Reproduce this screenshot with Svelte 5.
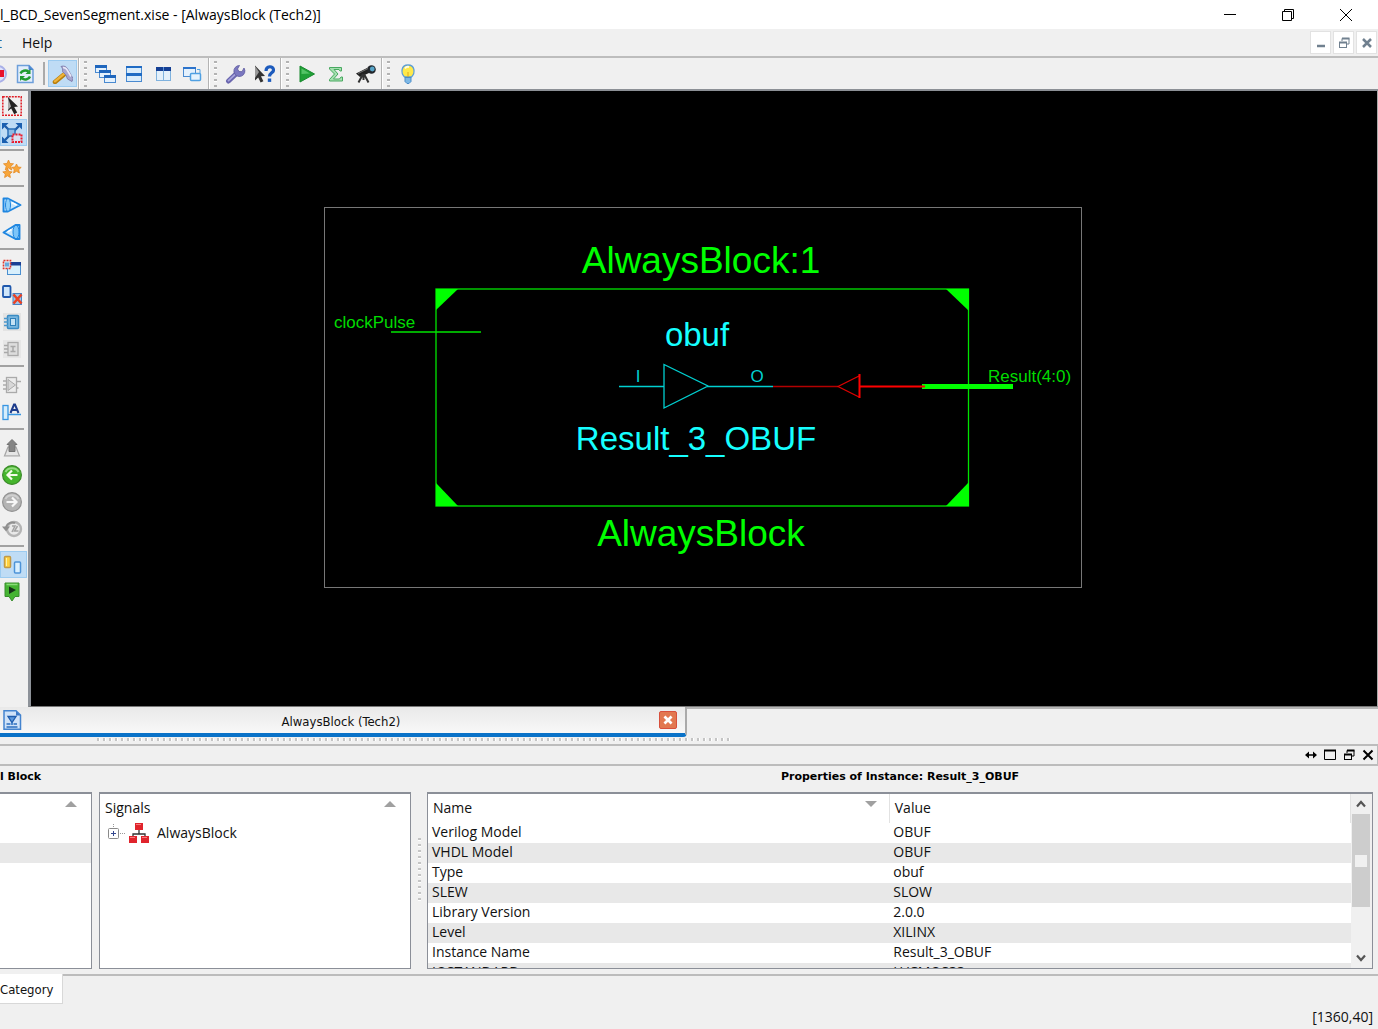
<script>
  const icons = {
    stop: '<circle cx="12" cy="10" r="8" fill="#dfe2fb" stroke="#a9b0e8" stroke-width="2"/><rect x="8" y="6" width="10" height="7" fill="#e8112d"/>',
    refresh: '<path d="M2.500 1.500h11.500l4 4v13h-15.500z" fill="#e3eefb" stroke="#6d9fda" stroke-width="1.500"/><path d="M14 1.500v4h4" fill="#4c86d2" stroke="#4c86d2"/><path d="M5.500 9.500a5 4 0 0 1 8-2" fill="none" stroke="#1e9a2f" stroke-width="2.400"/><path d="M15.500 5v5h-5z" fill="#1e9a2f"/><path d="M15 12.500a5 4 0 0 1-8 2" fill="none" stroke="#1e9a2f" stroke-width="2.400"/><path d="M5 17v-5h5z" fill="#1e9a2f"/>',
    hammer: '<path d="M3 18L12 10.500" stroke="#b97f0c" stroke-width="4.500" stroke-linecap="round"/><path d="M3 17.300L12 9.800" stroke="#eeb33a" stroke-width="2.400" stroke-linecap="round"/><path d="M9 2.500C12 1.500 14.500 2.500 16 5.500l5 9-1 3-4.500-2.500-1.500-4-3.500-3.500c.5-2 0-3.500-1.500-5z" fill="#a7a6cf" stroke="#8480ae"/><path d="M11 3.500c2.500 0 3.500 1 4.500 3l3.500 6" fill="none" stroke="#e9e9f7" stroke-width="1.600"/>',
    cascade: '<g stroke="#4a8ad0" fill="#e4f1fd"><rect x=".5" y="1.500" width="11" height="7"/><rect x="4.500" y="6.500" width="11" height="7"/><rect x="9.500" y="11.500" width="11" height="7"/></g><g fill="#1f66bd"><rect y="1" width="12" height="3"/><rect x="4" y="6" width="12" height="3"/><rect x="9" y="11" width="12" height="3"/></g>',
    tileh: '<g stroke="#4a8ad0" fill="#d9ecfb"><rect x="2.500" y="2.500" width="15" height="7"/><rect x="2.500" y="10.500" width="15" height="7"/></g><g fill="#1f6bc4"><rect x="2" y="2" width="16" height="2"/><rect x="2" y="9" width="16" height="3"/></g>',
    tilev: '<g stroke="#7fb2de" fill="#e3f0fb"><rect x="3.500" y="3.500" width="7" height="13"/><rect x="10.500" y="3.500" width="7" height="13"/></g><rect x="3" y="3" width="15" height="4" fill="#143f94"/><path d="M10.500 3v4" stroke="#5b93d6"/>',
    windows: '<rect x="1.500" y="3.500" width="12" height="9" fill="#e4f1fd" stroke="#4a8ad0"/><rect x="1" y="3" width="13" height="2" fill="#2c74cc"/><rect x="8.500" y="9.500" width="10" height="7" rx="1" fill="#e4f2fd" stroke="#4fa0e2" stroke-width="1.500"/><path d="M15 5.500h3v3.500" fill="none" stroke="#4fa0e2"/>',
    wrench: '<path d="M3.500 17L12 9" stroke="#6a66ae" stroke-width="5" stroke-linecap="round"/><path d="M3.500 16.600L12 8.600" stroke="#a7a4de" stroke-width="1.800" stroke-linecap="round"/><path d="M19 4A5.500 5.500 0 1 1 14.500 1.500L12.500 5l1.500 2.500 3 .2z" fill="#7b78c0" stroke="#5d5aa0" stroke-width=".8"/>',
    whatsthis: '<path d="M1 1.500l10 10.500-4 .2 2.400 5-2.800 1.300-2.400-5L1 16.500z" fill="#333"/><path d="M1 2l4 6-4 6z" fill="#999"/><path d="M12 7c0-5.500 7.500-5.500 7.500-1 0 3-4 2.800-4 6.500" fill="none" stroke="#1d5bbd" stroke-width="3.200"/><rect x="13.800" y="14.500" width="3.400" height="3.400" fill="#1d5bbd"/>',
    play: '<path d="M3 2l14.500 8L3 18z" fill="#21a037" stroke="#198a2e"/><path d="M4.500 4.500L13 9.500 4.500 10z" fill="#54c466"/>',
    sigma: '<path d="M3.500 3.500h12v3.500h-1.500l-1-1.500H8l4 4.500-4.500 5h6l1.500-2h1.500v4h-13v-1.500l5-5.500-5-5z" fill="#a5e0b0" stroke="#48a960"/>',
    telescope: '<path d="M1 9.500L15 2.500l3.500 4.500L5 13z" fill="#222"/><circle cx="16.500" cy="5.500" r="4.300" fill="#22262b"/><circle cx="17.300" cy="5" r="2.400" fill="#58a5c8"/><path d="M8 10L3.500 18.500M9 10l4.500 8.500M8.500 10v6" stroke="#333" stroke-width="2"/><path d="M3 9.500l10-5" stroke="#777"/>',
    bulb: '<path d="M6.500 13C2.500 9 3 1 10 1s7.500 8 3.500 12z" fill="#ffe94a" stroke="#5c9ed6" stroke-width="1.300"/><path d="M7 4.500C8 3 10 2.700 11 3" stroke="#fffde0" stroke-width="2" fill="none"/><path d="M7 13.500h6v4l-2 2H9l-2-2z" fill="#7db8e6" stroke="#4b8dc8"/><path d="M10 8v5" stroke="#e0a81c"/>',
    select: '<rect x=".8" y=".8" width="18.400" height="18.400" fill="none" stroke="#e01b24" stroke-width="1.500" stroke-dasharray="2 1"/><path d="M6 1l10 9.500-3.800.6 3 5.400-3 1.700-3-5.700L6 15z" fill="#222"/><path d="M6 2v12l3-3.500z" fill="#aaa"/>',
    zoomfull: '<path d="M3 3l14 14M17 3L3 17" stroke="#1d5ca8" stroke-width="2.400"/><path d="M0 0h6.500L0 6.500zM20 0v6.500L13.500 0zM0 20v-6.500L6.500 20z" fill="#1a5fb0"/><rect x="6" y="6" width="7" height="7" fill="#8ebce6" stroke="#2d70b8" stroke-width="1.500"/><rect x="10.500" y="11.500" width="9" height="7.500" fill="#d9dff0" stroke="#ea1a2c" stroke-width="2" stroke-dasharray="2 1"/>',
    stars: '<g fill="#f8a63a" stroke="#e58a25" stroke-width=".8"><path d="M6.500 1l1.500 3.500 3.500.3-2.700 2.500.9 3.700-3.200-2-3.200 2 .9-3.700L1.500 4.800l3.500-.3z"/><path d="M14.500 5l1.400 3 3.300.4-2.500 2.200.7 3.400-2.900-1.700-2.900 1.700.7-3.400-2.500-2.200 3.300-.4z"/><path d="M5.500 9.500l1.400 3 3.300.4-2.500 2.200.7 3.400-2.900-1.700-2.900 1.700.7-3.400-2.500-2.200 3.300-.4z"/></g>',
    coneright: '<path d="M1.500 3.500h4.500L18.500 10 6 16.500H1.500z" fill="#c8e6fb" stroke="#1f86e0" stroke-width="1.900" stroke-linejoin="round"/><ellipse cx="6" cy="10" rx="2.500" ry="6.500" fill="#8fd0fb" stroke="#1f86e0"/><path d="M9.500 7.500l5 2.500" stroke="#fff" stroke-width="1.500"/>',
    coneleft: '<path d="M17.500 3h-4L1.500 10.500l12 6.500h4z" fill="#c8e6fb" stroke="#1f86e0" stroke-width="1.900" stroke-linejoin="round"/><ellipse cx="14" cy="10" rx="3" ry="6.800" fill="#7cc5fa" stroke="#1f86e0"/><path d="M5.500 10l4-2.500" stroke="#fff" stroke-width="1.500"/>',
    addblock: '<rect x="5.500" y="5.500" width="13" height="11" fill="#d8effc" stroke="#4a8fd0"/><rect x="5" y="4" width="14" height="3.500" fill="#1b3f94"/><rect x="1.500" y="2.500" width="7" height="8" fill="#d9edf9" stroke="#e2352b" stroke-width="1.600" stroke-dasharray="2 1"/><rect x="3" y="4.500" width="4" height="4" fill="#67a9dd"/>',
    removeblock: '<rect x="1" y="1" width="7.500" height="11" rx="1" fill="#cfe6fa" stroke="#1f58ad" stroke-width="1.800"/><rect x="11" y="8.500" width="8.500" height="11" fill="#9fc6ea" stroke="#4a83c4"/><path d="M11.500 9.500l8 9M19.500 9.500l-8 9" stroke="#ea4224" stroke-width="2.600"/>',
    chipblue: '<rect x="1" y="1" width="18" height="18" fill="#e3e3e3"/><rect x="5.500" y="3.500" width="11" height="13" rx="1" fill="#7ab6de" stroke="#3a8cc4" stroke-width="1.500"/><rect x="8.500" y="6.500" width="5" height="7" fill="#c5e2f4" stroke="#2f80ba"/><path d="M2 6.500h4M2 10h4M2 13.500h4" stroke="#4c98cc" stroke-width="1.500"/>',
    chipgray: '<rect x="1" y="1" width="18" height="18" fill="#e6e6e6"/><rect x="6" y="3.500" width="10" height="13" fill="#ddd" stroke="#aaa" stroke-width="1.300"/><path d="M2 6.500h4M2 10h4M2 13.500h4M8.500 7.500h5M11 7.500v5M8.500 12.500h5" stroke="#a8a8a8" stroke-width="1.500"/>',
    buffer: '<rect x="4.500" y="2.500" width="10" height="15" fill="#ececec" stroke="#aaa" stroke-width="1.300"/><path d="M6 4.500v11L13.500 10z" fill="#d8d8d8" stroke="#aaa"/><path d="M1 6h4M1 10h4M1 14h4M14.500 6.500H19M14.500 13h2" stroke="#aaa" stroke-width="1.500"/>',
    labela: '<rect x="1" y="3.500" width="5" height="14" fill="#d5edfc" stroke="#3795e2" stroke-width="1.300"/><path d="M6 12.500h13" stroke="#3795e2" stroke-width="1.500"/><path d="M8.500 11L12 2.500h1L16.500 11M10 8h5" fill="none" stroke="#1d3c8c" stroke-width="2"/>',
    uphier: '<path d="M6 9L2.500 18h15L14 9z" fill="#e6e6e6" stroke="#a6a6a6" stroke-width="1.200"/><path d="M10 1.500l5 5h-2v7H7v-7H5z" fill="#858585" stroke="#727272"/><path d="M4 17.500h12" stroke="#bbb"/>',
    back: '<circle cx="10" cy="10" r="9.400" fill="#45b52c" stroke="#3c8a2b" stroke-width="1.200"/><path d="M3.500 7a7 6 0 0 1 13 0" fill="none" stroke="#93db80" stroke-width="2"/><path d="M15.500 10H6M10 5.500L5.500 10l4.500 4.500" fill="none" stroke="#f4fbe9" stroke-width="2.200"/>',
    forward: '<circle cx="10" cy="10" r="9.400" fill="#b4b4b4" stroke="#929292" stroke-width="1.200"/><path d="M3.500 7a7 6 0 0 1 13 0" fill="none" stroke="#cfcfcf" stroke-width="2"/><path d="M4.500 10H14M10 5.500l4.500 4.500-4.500 4.500" fill="none" stroke="#f6f6f6" stroke-width="2.200"/>',
    history: '<circle cx="12" cy="10" r="7" fill="#e9e9e9" stroke="#b4b4b4" stroke-width="2.400"/><path d="M0 7.500h8L4 12.500z" fill="#8f8f8f"/><path d="M4 8c1.500-4 6-5.500 9-4" fill="none" stroke="#8f8f8f" stroke-width="2"/><path d="M10 7h3l-3 6M15.500 7l-3 5h4" fill="none" stroke="#a2a2a2" stroke-width="1.500"/>',
    pair: '<rect x="2.500" y="1.500" width="6" height="11" rx="1" fill="#ffd23f" stroke="#c0994a" stroke-width="1.500"/><path d="M4.500 3v8" stroke="#fff1a8"/><rect x="12.500" y="7" width="6" height="11" rx="1" fill="#d9efff" stroke="#4d93d8" stroke-width="1.500"/>',
    marker: '<path d="M3 1h14v13.500h-4L10 19l-3-4.500H3z" fill="#46b433" stroke="#398e2d"/><path d="M4.500 2.500h11" stroke="#8bdc7a" stroke-width="1.500"/><path d="M7 4.500l7 3.500-7 4z" fill="#17331a"/>',
    doc: '<path d="M2 .8h12L18.500 5v14.200H2z" fill="#cfe2f8" stroke="#4484cf" stroke-width="1.500"/><path d="M14 1v4.500h4.500z" fill="#3b78c6"/><path d="M6 6.500h8l-4 6z" fill="#5c98dc" stroke="#1f5cad" stroke-width="1.300"/><path d="M4.500 14h4M10 12v3M11.500 14H15M4.500 17h11" stroke="#2d6fbe" stroke-width="1.500"/>',
    hierarchy: '<path d="M10 7v4M4 14v-3h12v3" fill="none" stroke="#333" stroke-width="1.300"/><g fill="#e0242c"><rect x="6" y="0" width="8" height="7"/><rect x="0" y="13" width="8" height="7"/><rect x="12" y="13" width="8" height="7"/></g><path d="M7 1.500h5M1 14.500h5M13 14.500h5" stroke="#f87a7a"/>'
  };

  const toolGroups = [
    [['cascade', 'Cascade'], ['tileh', 'Tile Horizontally'], ['tilev', 'Tile Vertically'], ['windows', 'Float']],
    [['wrench', 'Preferences'], ['whatsthis', "What's This?"]],
    [['play', 'Run'], ['sigma', 'Summary'], ['telescope', 'Analyze']],
    [['bulb', 'Tip of the Day']]
  ];

  const sideGroups = [
    [['select', 'Select'], ['zoomfull', 'Zoom to Selected', true]],
    [['stars', 'Show Wizard']],
    [['coneright', 'Show Output Cone'], ['coneleft', 'Show Input Cone']],
    [['addblock', 'Add Block'], ['removeblock', 'Remove Block'], ['chipblue', 'Show Block'], ['chipgray', 'Hide Block']],
    [['buffer', 'Show Pins'], ['labela', 'Add Label']],
    [['uphier', 'Up Hierarchy'], ['back', 'Back'], ['forward', 'Forward'], ['history', 'History']],
    [['pair', 'Toggle View', true], ['marker', 'Markers']]
  ];

  const properties = [
    ['Verilog Model', 'OBUF'],
    ['VHDL Model', 'OBUF'],
    ['Type', 'obuf'],
    ['SLEW', 'SLOW'],
    ['Library Version', '2.0.0'],
    ['Level', 'XILINX'],
    ['Instance Name', 'Result_3_OBUF'],
    ['IOSTANDARD', 'LVCMOS33']
  ];
</script>

{#snippet icon(name)}
  <svg class="icon" viewBox="0 0 21 20" aria-hidden="true">{@html icons[name]}</svg>
{/snippet}

{#snippet restore()}
  <svg class="glyph" viewBox="0 0 12 12" aria-hidden="true">
    <path d="M4 4V1.500h7V7H8.500" fill="none" stroke="currentColor" /><path d="M4 1.500h7.500" stroke="currentColor" stroke-width="2" />
    <rect x="1.500" y="5.500" width="7" height="5" fill="none" stroke="currentColor" /><path d="M1 5.500h8" stroke="currentColor" stroke-width="2" />
  </svg>
{/snippet}

<div class="window">
  <header class="titlebar">
    <h1>l_BCD_SevenSegment.xise - [AlwaysBlock (Tech2)]</h1>
    <div class="syscontrols">
      <button aria-label="Minimize"><svg viewBox="0 0 12 12"><path d="M0 5.500h12" stroke="#000" /></svg></button>
      <button aria-label="Restore"><svg viewBox="0 0 12 12"><path d="M.5 2.500h9v9h-9zM2.500 2.500v-2h9v9h-2" fill="none" stroke="#000" /></svg></button>
      <button aria-label="Close"><svg viewBox="0 0 12 12"><path d="M0 0l12 12M12 0L0 12" stroke="#000" /></svg></button>
    </div>
  </header>

  <nav class="menubar">
    <button class="cut">t</button>
    <button>Help</button>
    <div class="mdi">
      <button aria-label="Minimize document"><svg class="glyph" viewBox="0 0 12 12"><path d="M2 9h8" stroke="currentColor" stroke-width="2.500" /></svg></button>
      <button aria-label="Restore document">{@render restore()}</button>
      <button aria-label="Close document"><svg class="glyph" viewBox="0 0 12 12"><path d="M2 2l8 8M10 2l-8 8" stroke="currentColor" stroke-width="2.500" /></svg></button>
    </div>
  </nav>

  <div class="toolbar" role="toolbar" aria-label="Main">
    <div class="group first">
      <button aria-label="Stop">{@render icon('stop')}</button>
      <button aria-label="Refresh">{@render icon('refresh')}</button>
      <span class="rule"></span>
      <button class="on" aria-label="Implement">{@render icon('hammer')}</button>
    </div>
    {#each toolGroups as group}
      <div class="group">
        <span class="grip"></span>
        {#each group as [name, label]}
          <button aria-label={label}>{@render icon(name)}</button>
        {/each}
      </div>
    {/each}
  </div>

  <main>
    <div class="side" role="toolbar" aria-label="Schematic">
      {#each sideGroups as group}
        <div class="sidegroup">
          {#each group as [name, label, on]}
            <button class:on aria-label={label}>{@render icon(name)}</button>
          {/each}
        </div>
      {/each}
    </div>
    <div class="canvas">
      <svg class="schematic" viewBox="324 207 758 381" role="img" aria-label="AlwaysBlock schematic">
        <rect x="324.500" y="207.500" width="757" height="380" fill="none" stroke="#777" />
        <g fill="none" stroke="#00e400" stroke-width="1.300">
          <rect x="436" y="289" width="532.500" height="217" />
          <path d="M391 332h90" />
        </g>
        <g fill="#0f0">
          <path d="M436 289h22l-22 21z" />
          <path d="M969 289v22l-23-22z" />
          <path d="M436 506v-23l22 23z" />
          <path d="M969 506v-24l-23 24z" />
          <rect x="922" y="384" width="91" height="5" />
        </g>
        <g fill="none" stroke="#00cfd0" stroke-width="1.300">
          <path d="M619 386.500h45M707 386.500h66M664 364.500v43.500l44-22z" />
        </g>
        <path d="M773 386.500h65" stroke="#b40000" stroke-width="1.500" />
        <path d="M860 375.500L838 386.500l22 11" fill="none" stroke="#e00000" stroke-width="1.200" />
        <path d="M859.500 374v24M860 386.500h65" stroke="#f00" stroke-width="2" />
        <g fill="#0f0" font-size="37" text-anchor="middle">
          <text x="701" y="273">AlwaysBlock:1</text>
          <text x="701" y="546">AlwaysBlock</text>
        </g>
        <g fill="#16ffff" font-size="33" text-anchor="middle">
          <text x="697" y="346">obuf</text>
          <text x="696" y="450">Result_3_OBUF</text>
        </g>
        <g fill="#00cfd0" font-size="17" text-anchor="middle">
          <text x="638" y="382">I</text>
          <text x="757" y="382">O</text>
        </g>
        <g fill="#00dc00" font-size="17">
          <text x="334" y="328">clockPulse</text>
          <text x="988" y="382">Result(4:0)</text>
        </g>
      </svg>
    </div>
  </main>

  <div class="doctabs">
    <div class="doctab">
      {@render icon('doc')}
      <button class="doctitle">AlwaysBlock (Tech2)</button>
      <button class="closetab" aria-label="Close tab"><svg viewBox="0 0 18 18"><path d="M5 5l8 8M13 5l-8 8" stroke="#fff" stroke-width="3" /></svg></button>
    </div>
    <div class="tabrest"></div>
  </div>
  <div class="hsplit"><span></span></div>

  <section class="dock">
    <div class="dockbar">
      <button aria-label="Stretch"><svg class="glyph" viewBox="0 0 12 12"><path d="M0 6l4-3.500v7zM12 6L8 2.500v7z" /><path d="M2 6h8" stroke="#000" stroke-width="1.500" /></svg></button>
      <button aria-label="Maximize"><svg class="glyph" viewBox="0 0 12 12"><path d="M.5 1.500h11v9H.5z" fill="none" stroke="#000" /><path d="M0 1.500h12" stroke="#000" stroke-width="2" /></svg></button>
      <button aria-label="Float">{@render restore()}</button>
      <button aria-label="Close dock"><svg class="glyph" viewBox="0 0 12 12"><path d="M1.500 1.500l9 9M10.500 1.500l-9 9" stroke="#000" stroke-width="2" /></svg></button>
    </div>

    <div class="views">
      <div class="left">
        <h2>l Block</h2>
        <div class="lists">
          <div class="list instances"><span class="sort"></span><div class="stripe"></div></div>
          <div class="list signals">
            <div class="listhead">Signals<span class="sort"></span></div>
            <div class="treeitem">
              <button class="expand" aria-label="Expand AlwaysBlock"><svg viewBox="0 0 17 18"><rect x=".5" y="4.500" width="10" height="10" rx="1" fill="#fff" stroke="#8a8a8a" /><path d="M3 9.500h5M5.500 7v5" stroke="#33488f" /><path d="M5.500 0v4M12 9.500h5" stroke="#999" stroke-dasharray="1 1" /></svg></button>
              {@render icon('hierarchy')}
              <span>AlwaysBlock</span>
            </div>
          </div>
        </div>
      </div>
      <div class="vsplit"><span></span></div>
      <div class="right">
        <h2>Properties of Instance: Result_3_OBUF</h2>
        <div class="list props">
          <div class="tablewrap">
            <table>
              <thead><tr><th>Name<span class="sort down"></span></th><th>Value</th></tr></thead>
              <tbody>
                {#each properties as [name, value]}
                  <tr><td>{name}</td><td>{value}</td></tr>
                {/each}
              </tbody>
            </table>
          </div>
          <div class="scroll">
            <button aria-label="Scroll up"><svg viewBox="0 0 10 8"><path d="M1 6.500L5 2l4 4.500" fill="none" stroke="#555" stroke-width="2.200" /></svg></button>
            <div class="thumb"><span></span></div>
            <button aria-label="Scroll down"><svg viewBox="0 0 10 8"><path d="M1 1.500L5 6l4-4.500" fill="none" stroke="#555" stroke-width="2.200" /></svg></button>
          </div>
        </div>
      </div>
    </div>
  </section>

  <div class="bottomtabs"><button>Category</button><div class="bottomrest"></div></div>
  <footer>[1360,40]</footer>
</div>

<style>
  :global(body) { margin: 0; background: #f0f0f0; }
  .window {
    min-height: 100vh; display: flex; flex-direction: column; overflow: hidden;
    background: #f0f0f0; color: #111; font-family: "Open Sans", "Noto Sans", sans-serif; font-size: 14px; line-height: 20px;
  }
  button { border: 0; padding: 0; background: none; color: inherit; font: inherit; display: flex; align-items: center; justify-content: center; flex: none; box-sizing: border-box; }
  svg { display: block; flex: none; }
  .icon { width: 21px; height: 20px; }
  .glyph { width: 12px; height: 12px; }

  .titlebar { height: 29px; background: #fff; display: flex; align-items: center; justify-content: space-between; }
  h1 { margin: 0; font-size: 14px; font-weight: 400; color: #000; white-space: nowrap; }
  .syscontrols { display: flex; padding-right: 3px; }
  .syscontrols button { width: 58px; height: 29px; }
  .syscontrols svg { width: 12px; height: 12px; }

  .menubar { height: 27px; display: flex; align-items: center; }
  .menubar .cut { width: 2px; margin-right: 20px; overflow: hidden; justify-content: flex-end; color: #2a6a9c; }
  .mdi { margin-left: auto; display: flex; gap: 2px; padding-right: 1px; }
  .mdi button { width: 21px; height: 23px; background: #fff; border: 1px solid #e2e2e2; color: #70808f; }

  .toolbar { height: 31px; border-top: 2px solid #bdbdbd; border-bottom: 2px solid #8c9096; display: flex; }
  .group { display: flex; align-items: center; padding-right: 1px; border-right: 1px solid #b4b4b4; box-shadow: 1px 0 #fff; margin-right: 1px; }
  .group:last-child { border: 0; box-shadow: none; }
  .group button { width: 29px; height: 27px; }
  .first { margin-left: -18px; }
  .first .rule { width: 2px; height: 23px; margin: 0 3px; background: #aaa; }
  .on { background: #bfdcf5; border: 1px solid #9ccbf0; }
  .grip { width: 3px; height: 26px; margin: 0 4px; background: repeating-linear-gradient(#b3b3b3 0 2px, #fff 2px 3px, #f0f0f0 3px 6px); }

  main { flex: 1 0 auto; display: flex; }
  .side { width: 28px; padding-top: 1px; }
  .sidegroup + .sidegroup::before { content: ""; display: block; width: 24px; height: 2px; background: #a2a2a2; border: solid #f0f0f0; border-width: 3px 0 4px; }
  .side button { width: 27px; height: 27px; padding-right: 3px; }
  .canvas { flex: 1; min-height: 500px; background: #000; border-left: 3px solid #8d9299; border-right: 1px solid #aaa; border-bottom: 1px solid #777; display: flex; align-items: center; justify-content: center; padding: 0 2px 2px 0; }
  .schematic { width: 758px; height: 381px; font-family: "Liberation Sans", Arial, sans-serif; }

  .doctabs { height: 30px; display: flex; font: 13px/20px "DejaVu Sans Condensed", "DejaVu Sans", sans-serif; }
  .doctab { flex: 0 1 687px; box-sizing: border-box; display: flex; align-items: center; padding: 0 8px 0 2px; background: linear-gradient(#e9e9e9, #f8f8f8); border-bottom: 4px solid #0a72c8; border-right: 2px solid #aaa; border-radius: 0 0 4px 0; }
  .doctitle { flex: 1; padding-top: 4px; }
  .closetab { width: 18px; height: 18px; background: #e27850; border: 1px solid #d8503c; border-radius: 2px; }
  .closetab svg { width: 16px; height: 16px; }
  .tabrest { flex: 1; border-top: 2px solid #b5b5b5; }
  .hsplit { height: 7px; display: flex; }
  .hsplit span { width: 636px; height: 3px; margin: 1px 0 0 97px; background: repeating-linear-gradient(90deg, #c4c4c4 0 2px, #fff 2px 3px, #f0f0f0 3px 6px); }

  .dockbar { height: 18px; border: solid #bcbcbc; border-width: 2px 1px 2px 0; display: flex; align-items: center; justify-content: flex-end; gap: 7px; padding-right: 3px; color: #000; }
  .views { display: flex; padding-bottom: 5px; }
  h2 { margin: 0; height: 26px; box-sizing: border-box; font: bold 11px/21px "DejaVu Sans", sans-serif; color: #000; white-space: nowrap; }
  .lists { display: flex; gap: 7px; }
  .list { height: 177px; box-sizing: border-box; border: 1px solid #8b8f98; border-top-width: 2px; background: #fff; position: relative; }
  .instances { width: 92px; border-left: 0; padding-top: 49px; }
  .stripe { height: 20px; background: #e8e8e8; }
  .signals { width: 312px; padding: 4px 5px; }
  .sort { position: absolute; right: 14px; top: 7px; border: 6px solid transparent; border-top: 0; border-bottom-color: #a0a0a0; }
  .sort.down { border-top: 6px solid #a0a0a0; border-bottom: 0; }
  .listhead { height: 25px; }
  .treeitem { display: flex; align-items: center; height: 20px; margin-left: 3px; }
  .expand { margin-right: 4px; }
  .expand svg { width: 17px; height: 18px; }
  .treeitem span { margin-left: 7px; }
  .vsplit { width: 16px; display: flex; align-items: center; justify-content: center; }
  .vsplit span { width: 3px; height: 66px; margin-top: 6px; background: repeating-linear-gradient(#c4c4c4 0 2px, #fff 2px 3px, #f0f0f0 3px 6px); }
  .right { flex: 1; margin-right: 5px; min-width: 0; }
  .right h2 { text-align: center; }
  .props { display: flex; overflow: hidden; }
  .tablewrap { flex: 1; overflow: hidden; }
  table { width: 100%; border-collapse: collapse; table-layout: fixed; }
  th { position: relative; height: 29px; padding: 0 5px 1px; text-align: left; font-weight: 400; border-right: 1px solid #e2e2e2; box-sizing: border-box; }
  th:first-child { width: 50%; }
  td { height: 20px; padding: 0 0 0 4px; line-height: 17px; vertical-align: top; white-space: nowrap; }
  th .sort { right: 12px; }
  tbody tr:nth-child(even) { background: #e8e8e8; }
  .scroll { width: 21px; background: #f0f0f0; display: flex; flex-direction: column; }
  .scroll button { width: 20px; height: 20px; }
  .scroll svg { width: 10px; height: 8px; }
  .thumb { height: 93px; margin: 0 2px 0 1px; background: #cdcdcd; display: flex; align-items: center; justify-content: center; }
  .thumb span { width: 12px; height: 12px; background: #f0f0f0; }
  .scroll button:last-child { margin-top: auto; }

  .bottomtabs { display: flex; height: 30px; font: 13px/20px "DejaVu Sans Condensed", "DejaVu Sans", sans-serif; }
  .bottomtabs button { padding: 2px 9px 0 0; background: #fff; border: solid #d8d8d8; border-width: 0 1px 1px 0; }
  .bottomrest { flex: 1; border-top: 2px solid #bcbcbc; }
  footer { height: 25px; box-sizing: border-box; padding: 3px 5px 0 0; text-align: right; }
</style>
